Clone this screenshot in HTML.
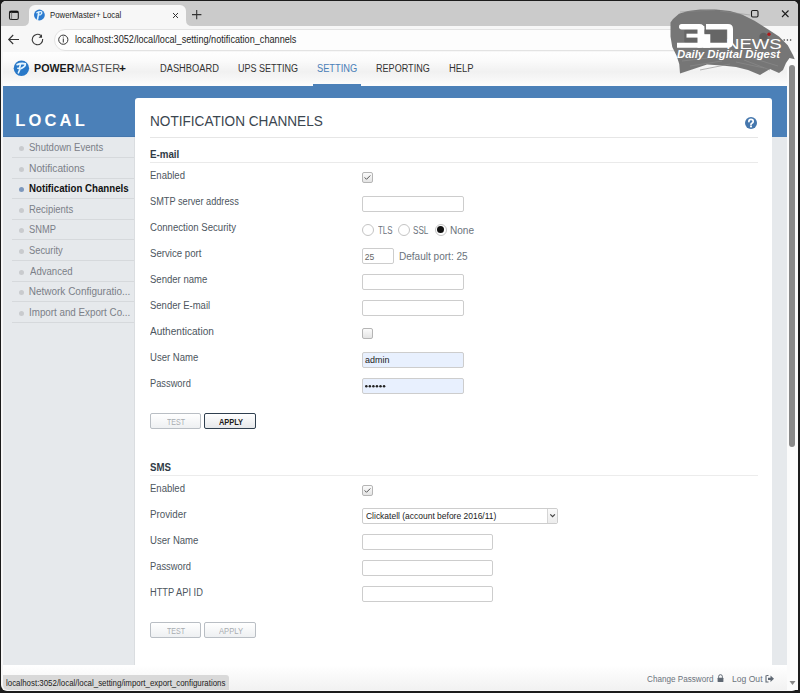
<!DOCTYPE html>
<html><head><meta charset="utf-8">
<style>
*{margin:0;padding:0;box-sizing:border-box}
html,body{width:800px;height:693px;overflow:hidden;background:#1c1c1c;font-family:"Liberation Sans",sans-serif}
div{position:absolute}
.t{white-space:nowrap;line-height:1;transform-origin:0 0}
.inp{left:362px;width:102px;height:16px;border:1px solid #cdcdcd;border-radius:2px;background:#fff}
.chk{left:362px;width:11px;height:11px;border:1px solid #b5b5b5;border-radius:2px;background:linear-gradient(#fbfbfb,#e4e4e4)}
.rad{width:12px;height:12px;border-radius:50%;border:1px solid #c4c4c4;background:#fff}
.btn{height:16px;border:1px solid #b9bec4;border-radius:2px;background:linear-gradient(#fff,#eef0f2)}
.sep{height:1px;background:#d5d9dd}
.dot{width:5px;height:5px;border-radius:50%;background:#c9cbce}
</style></head><body>
<div style="left:1px;top:1px;width:797px;height:690px;background:#f7f7f7;border-radius:5px 5px 6px 6px"></div>
<div style="left:1px;top:1px;width:797px;height:25px;background:#cbcbcb;border-radius:5px 5px 0 0"></div>
<div style="left:29px;top:5px;width:157px;height:22px;background:#f7f7f7;border-radius:6px 6px 0 0"></div>
<svg style="position:absolute;left:0;top:0" width="220" height="27">
 <path d="M23 26 Q29 26 29 20 L29 26 Z" fill="#f7f7f7"/>
 <path d="M186 20 Q186 26 192 26 L186 26 Z" fill="#f7f7f7"/>
 <rect x="9.5" y="11.2" width="8.8" height="8.3" rx="1.6" fill="none" stroke="#1e1e1e" stroke-width="1.1"/>
 <rect x="9.6" y="10.8" width="8.6" height="2.1" fill="#111"/>
 <line x1="11.6" y1="12" x2="11.6" y2="19.5" stroke="#555" stroke-width="0.7"/>
 <circle cx="39.4" cy="15" r="5.4" fill="#2b7bd0"/>
 <path d="M36.8 12.7 Q39.2 11.3 41.6 11.9 Q42.5 13.3 40.8 14.5 Q40 15 39.1 14.9" fill="none" stroke="#dff3ff" stroke-width="1.3" stroke-linecap="round"/>
 <path d="M38.7 12.6 L37.6 19.2" fill="none" stroke="#dff3ff" stroke-width="1.6" stroke-linecap="round"/>
 <path d="M173 13 L178 18 M178 13 L173 18" stroke="#333" stroke-width="1"/>
 <path d="M192 14.6 L201.4 14.6 M196.7 10 L196.7 19.2" stroke="#333" stroke-width="1.1"/>
</svg>
<div class="t" style="left:49.88px;top:11px;font-size:9px;color:#1f1f1f;transform:scaleX(0.8667);">PowerMaster+ Local</div>
<div style="left:53.5px;top:29px;width:716px;height:21.5px;background:#fdfdfd;border-radius:11px;border:1px solid #e3e3e3"></div>
<svg style="position:absolute;left:0;top:26px" width="80" height="26">
 <path d="M9 13.5 L19 13.5 M13.2 9 L8.7 13.5 L13.2 18" fill="none" stroke="#333" stroke-width="1.1"/>
 <path d="M42.68 13.05 A5.2 5.2 0 1 1 40.84 9.52" fill="none" stroke="#3a3a3a" stroke-width="1.1"/>
 <path d="M41.9 8.2 L42.1 11.8 L38.6 11.7 Z" fill="#333"/>
 <circle cx="63.3" cy="13.7" r="4.6" fill="none" stroke="#333" stroke-width="1"/>
 <path d="M63.3 12.5 L63.3 16.5" stroke="#333" stroke-width="1"/>
 <circle cx="63.3" cy="11" r="0.55" fill="#333"/>
</svg>
<div class="t" style="left:74.71px;top:35px;font-size:10px;color:#1f1f1f;transform:scaleX(0.9134);">localhost:3052/local/local_setting/notification_channels</div>
<div style="left:3px;top:52px;width:784px;height:623px;background:#fff;"></div>
<div style="left:3px;top:52px;width:784px;height:34px;background:linear-gradient(#fefefe,#fbfbfb 25%,#f1f1f1 58%,#f8f8f8 85%,#fdfdfd);"></div>
<svg style="position:absolute;left:13px;top:60px" width="17" height="17">
 <circle cx="8.4" cy="8.2" r="7.7" fill="#2878c8"/>
 <path d="M4.2 4.6 Q8 2.9 12.2 3.8 Q12.8 6.6 8.8 8.1 L8.2 8.3" fill="none" stroke="#e6f6ff" stroke-width="1.8" stroke-linecap="round"/>
 <path d="M7.4 4.3 L6.6 8 L4.9 8.3 L7.1 8.9 L5.4 12.8" fill="none" stroke="#e6f6ff" stroke-width="1.6" stroke-linecap="round" stroke-linejoin="round"/>
</svg>
<div class="t" style="left:34.30px;top:64px;font-size:10px;color:#1a1a1a;font-weight:bold;transform:scaleX(1.0717);">POWER</div>
<div class="t" style="left:74.53px;top:64px;font-size:10px;color:#4a4a4a;transform:scaleX(1.0828);">MASTER</div>
<div class="t" style="left:119.12px;top:64px;font-size:10px;color:#1a1a1a;font-weight:bold;transform:scaleX(1.1881);">+</div>
<div class="t" style="left:159.51px;top:64px;font-size:10px;color:#333;transform:scaleX(0.9300);">DASHBOARD</div>
<div class="t" style="left:238.02px;top:64px;font-size:10px;color:#333;transform:scaleX(0.9003);">UPS SETTING</div>
<div class="t" style="left:317.48px;top:64px;font-size:10px;color:#4b80b8;transform:scaleX(0.9276);">SETTING</div>
<div style="left:313px;top:84px;width:48px;height:2px;background:#4b80b8;"></div>
<div class="t" style="left:376.27px;top:64px;font-size:10px;color:#333;transform:scaleX(0.9074);">REPORTING</div>
<div class="t" style="left:448.65px;top:64px;font-size:10px;color:#333;transform:scaleX(0.9435);">HELP</div>
<div style="left:3px;top:86px;width:784px;height:51px;background:#4b80b8;"></div>
<div class="t" style="left:15.18px;top:111.5px;font-size:16.5px;color:#fff;font-weight:bold;letter-spacing:3.2px">LOCAL</div>
<div style="left:3px;top:137px;width:132px;height:528px;background:#e6e9ec;border-right:1px solid #dadde0"></div>
<div style="left:3px;top:136px;width:132px;height:1px;background:#4577ad;"></div>
<div style="left:3px;top:137px;width:131px;height:1px;background:#e0e7ef;"></div>
<div style="left:772px;top:137px;width:15px;height:528px;background:#e6e9ec;"></div>
<div style="left:12px;top:157px;width:122px;height:1px;background:#d6d9dc;"></div>
<div style="left:19px;top:145.5px;width:5px;height:5px;background:#c9cbce;border-radius:50%"></div>
<div class="t" style="left:29.07px;top:143px;font-size:10px;color:#7b8088;transform:scaleX(0.9539);">Shutdown Events</div>
<div style="left:12px;top:178px;width:122px;height:1px;background:#d6d9dc;"></div>
<div style="left:19px;top:166.5px;width:5px;height:5px;background:#c9cbce;border-radius:50%"></div>
<div class="t" style="left:28.68px;top:164px;font-size:10px;color:#7b8088;transform:scaleX(1.0225);">Notifications</div>
<div style="left:12px;top:198px;width:122px;height:1px;background:#d6d9dc;"></div>
<div style="left:19px;top:186.5px;width:5px;height:5px;background:#7d98bd;border-radius:50%"></div>
<div class="t" style="left:28.87px;top:184px;font-size:10px;color:#111;font-weight:bold;transform:scaleX(0.9700);">Notification Channels</div>
<div style="left:12px;top:219px;width:122px;height:1px;background:#d6d9dc;"></div>
<div style="left:19px;top:207.5px;width:5px;height:5px;background:#c9cbce;border-radius:50%"></div>
<div class="t" style="left:28.74px;top:205px;font-size:10px;color:#7b8088;transform:scaleX(0.9462);">Recipients</div>
<div style="left:12px;top:239px;width:122px;height:1px;background:#d6d9dc;"></div>
<div style="left:19px;top:227.5px;width:5px;height:5px;background:#c9cbce;border-radius:50%"></div>
<div class="t" style="left:29.08px;top:225px;font-size:10px;color:#7b8088;transform:scaleX(0.9319);">SNMP</div>
<div style="left:12px;top:260px;width:122px;height:1px;background:#d6d9dc;"></div>
<div style="left:19px;top:248.5px;width:5px;height:5px;background:#c9cbce;border-radius:50%"></div>
<div class="t" style="left:29.08px;top:246px;font-size:10px;color:#7b8088;transform:scaleX(0.9341);">Security</div>
<div style="left:12px;top:281px;width:122px;height:1px;background:#d6d9dc;"></div>
<div style="left:19px;top:269.5px;width:5px;height:5px;background:#c9cbce;border-radius:50%"></div>
<div class="t" style="left:30.30px;top:267px;font-size:10px;color:#7b8088;transform:scaleX(0.9578);">Advanced</div>
<div style="left:12px;top:301px;width:122px;height:1px;background:#d6d9dc;"></div>
<div style="left:19px;top:289.5px;width:5px;height:5px;background:#c9cbce;border-radius:50%"></div>
<div class="t" style="left:28.70px;top:287px;font-size:10px;color:#7b8088;">Network Configuratio...</div>
<div style="left:12px;top:322px;width:122px;height:1px;background:#d6d9dc;"></div>
<div style="left:19px;top:310.5px;width:5px;height:5px;background:#c9cbce;border-radius:50%"></div>
<div class="t" style="left:28.62px;top:308px;font-size:10px;color:#7b8088;transform:scaleX(0.9793);">Import and Export Co...</div>
<div style="left:135px;top:98px;width:637px;height:567px;background:#fff;border-radius:3px 3px 0 0"></div>
<div class="t" style="left:149.71px;top:114px;font-size:14px;color:#3b4650;transform:scaleX(0.9717);">NOTIFICATION CHANNELS</div>
<div style="left:150px;top:137px;width:608px;height:1px;background:#e6e6e6;"></div>
<div style="left:745px;top:116.5px;width:12px;height:12px;background:#4577ad;border-radius:50%"></div>
<svg style="position:absolute;left:745px;top:116.5px" width="12" height="12"><path d="M3.9 4.6 Q3.9 2.4 6 2.4 Q8.2 2.4 8.2 4.4 Q8.2 5.6 6.9 6.2 Q6 6.6 6 7.6" fill="none" stroke="#fff" stroke-width="1.7" stroke-linecap="round"/><circle cx="6" cy="9.5" r="1.05" fill="#fff"/></svg>
<div class="t" style="left:149.57px;top:150px;font-size:10px;color:#2f3a45;font-weight:bold;transform:scaleX(0.9756);">E-mail</div>
<div style="left:150px;top:162px;width:608px;height:1px;background:#eaeaea;"></div>
<div class="t" style="left:150.24px;top:171px;font-size:10px;color:#4d5660;transform:scaleX(0.9518);">Enabled</div>
<div class="t" style="left:149.79px;top:197px;font-size:10px;color:#4d5660;transform:scaleX(0.9195);">SMTP server address</div>
<div class="t" style="left:149.72px;top:223px;font-size:10px;color:#4d5660;transform:scaleX(0.9607);">Connection Security</div>
<div class="t" style="left:149.77px;top:249px;font-size:10px;color:#4d5660;transform:scaleX(0.9641);">Service port</div>
<div class="t" style="left:149.77px;top:275px;font-size:10px;color:#4d5660;transform:scaleX(0.9544);">Sender name</div>
<div class="t" style="left:149.77px;top:301px;font-size:10px;color:#4d5660;transform:scaleX(0.9486);">Sender E-mail</div>
<div class="t" style="left:150.20px;top:327px;font-size:10px;color:#4d5660;transform:scaleX(1.0072);">Authentication</div>
<div class="t" style="left:150.28px;top:353px;font-size:10px;color:#4d5660;transform:scaleX(0.9534);">User Name</div>
<div class="t" style="left:150.26px;top:379px;font-size:10px;color:#4d5660;transform:scaleX(0.9294);">Password</div>
<div style="left:362px;top:172px;width:11px;height:11px;background:;border:1px solid #b5b5b5;border-radius:2px;background:linear-gradient(#fbfbfb,#e4e4e4)"></div>
<svg style="position:absolute;left:362px;top:172px" width="11" height="11"><path d="M2.6 5.4 L4.5 7.3 L8.3 3.5" fill="none" stroke="#555" stroke-width="1"/></svg>
<div class="inp" style="top:196px"></div>
<div class="rad" style="left:362px;top:223.5px"></div>
<div class="rad" style="left:398px;top:223.5px"></div>
<div class="rad" style="left:434.5px;top:223.5px"></div>
<div style="left:437px;top:226px;width:7px;height:7px;background:#111;border-radius:50%"></div>
<div class="t" style="left:378.04px;top:226px;font-size:10px;color:#6b737c;transform:scaleX(0.7910);">TLS</div>
<div class="t" style="left:413.44px;top:226px;font-size:10px;color:#6b737c;transform:scaleX(0.8099);">SSL</div>
<div class="t" style="left:449.80px;top:226px;font-size:10px;color:#6b737c;transform:scaleX(1.0044);">None</div>
<div class="inp" style="top:248px;width:32px"></div>
<div class="t" style="left:364.77px;top:252.5px;font-size:8.5px;color:#666;">25</div>
<div class="t" style="left:398.90px;top:252px;font-size:10px;color:#6b737c;transform:scaleX(1.0037);">Default port: 25</div>
<div class="inp" style="top:274px"></div>
<div class="inp" style="top:300px"></div>
<div style="left:362px;top:328px;width:11px;height:11px;background:;border:1px solid #b5b5b5;border-radius:2px;background:linear-gradient(#fbfbfb,#e4e4e4)"></div>
<div class="inp" style="top:352px;background:#e8f0fe"></div>
<div class="t" style="left:364.64px;top:356px;font-size:9px;color:#222;transform:scaleX(0.9947);">admin</div>
<div class="inp" style="top:378px;background:#e8f0fe"></div>
<svg style="position:absolute;left:362px;top:378px" width="40" height="16"><circle cx="4.30" cy="8.2" r="1.25" fill="#222"/><circle cx="7.85" cy="8.2" r="1.25" fill="#222"/><circle cx="11.40" cy="8.2" r="1.25" fill="#222"/><circle cx="14.95" cy="8.2" r="1.25" fill="#222"/><circle cx="18.50" cy="8.2" r="1.25" fill="#222"/><circle cx="22.05" cy="8.2" r="1.25" fill="#222"/></svg>
<div style="left:150px;top:413px;width:51px;height:16px;background:;border:1px solid #b9bec4;border-radius:2px;background:linear-gradient(#fff,#eef0f2)"></div>
<div class="t" style="left:166.76px;top:418px;font-size:8.5px;color:#a8acb0;transform:scaleX(0.8327);">TEST</div>
<div style="left:204px;top:413px;width:52px;height:16px;background:;border:1px solid #2f3f4f;border-radius:2px;background:linear-gradient(#fff,#e6e8ea)"></div>
<div class="t" style="left:218.51px;top:418px;font-size:8.5px;color:#1c1c1c;font-weight:bold;transform:scaleX(0.8736);">APPLY</div>
<div class="t" style="left:149.96px;top:463px;font-size:10px;color:#2f3a45;font-weight:bold;transform:scaleX(0.9644);">SMS</div>
<div style="left:150px;top:475px;width:608px;height:1px;background:#ececec;"></div>
<div class="t" style="left:150.24px;top:484px;font-size:10px;color:#4d5660;transform:scaleX(0.9518);">Enabled</div>
<div class="t" style="left:150.22px;top:510px;font-size:10px;color:#4d5660;transform:scaleX(0.9780);">Provider</div>
<div class="t" style="left:150.28px;top:536px;font-size:10px;color:#4d5660;transform:scaleX(0.9575);">User Name</div>
<div class="t" style="left:150.25px;top:562px;font-size:10px;color:#4d5660;transform:scaleX(0.9341);">Password</div>
<div class="t" style="left:150.26px;top:588px;font-size:10px;color:#4d5660;transform:scaleX(0.9265);">HTTP API ID</div>
<div style="left:362px;top:485px;width:11px;height:11px;background:;border:1px solid #b5b5b5;border-radius:2px;background:linear-gradient(#fbfbfb,#e4e4e4)"></div>
<svg style="position:absolute;left:362px;top:485px" width="11" height="11"><path d="M2.6 5.4 L4.5 7.3 L8.3 3.5" fill="none" stroke="#555" stroke-width="1"/></svg>
<div class="inp" style="top:508px;width:196px"></div>
<div style="left:547px;top:509px;width:1px;height:14px;background:#d5d5d5;"></div>
<div style="left:548px;top:509px;width:9px;height:14px;background:linear-gradient(#fafafa,#ececec);border-radius:0 2px 2px 0"></div>
<svg style="position:absolute;left:548px;top:509px" width="10" height="14"><path d="M2.3 5.3 L4.6 7.6 L6.9 5.3" fill="none" stroke="#444" stroke-width="1.2"/></svg>
<div class="t" style="left:365.58px;top:512px;font-size:9px;color:#222;transform:scaleX(0.9416);">Clickatell (account before 2016/11)</div>
<div class="inp" style="top:534px;width:131px"></div>
<div class="inp" style="top:560px;width:131px"></div>
<div class="inp" style="top:586px;width:131px"></div>
<div style="left:150px;top:621.5px;width:51px;height:16px;background:;border:1px solid #b9bec4;border-radius:2px;background:linear-gradient(#fff,#eef0f2)"></div>
<div class="t" style="left:166.76px;top:626.5px;font-size:8.5px;color:#a8acb0;transform:scaleX(0.8327);">TEST</div>
<div style="left:204px;top:621.5px;width:52px;height:16px;background:;border:1px solid #b9bec4;border-radius:2px;background:linear-gradient(#fff,#eef0f2)"></div>
<div class="t" style="left:218.70px;top:626.5px;font-size:8.5px;color:#a8acb0;transform:scaleX(0.8946);">APPLY</div>
<div style="left:3px;top:665px;width:784px;height:25px;background:linear-gradient(#fff,#f2f2f2);"></div>
<div class="t" style="left:647.49px;top:675px;font-size:8.5px;color:#6b737c;transform:scaleX(0.9575);">Change Password</div>
<div class="t" style="left:732.11px;top:675px;font-size:8.5px;color:#6b737c;transform:scaleX(1.0089);">Log Out</div>
<svg style="position:absolute;left:715px;top:672px" width="62" height="14">
 <path d="M3.6 5.8 L3.6 4.6 A1.9 1.9 0 0 1 7.4 4.6 L7.4 5.8" fill="none" stroke="#5f6873" stroke-width="1"/>
 <rect x="2.6" y="5.7" width="5.8" height="4.4" rx="0.5" fill="#5f6873"/>
 <path d="M51.5 3.5 L53.5 3.5 M51 3.5 L51 10 L53.5 10" fill="none" stroke="#5f6873" stroke-width="1.1"/>
 <path d="M53 5.7 L55.5 5.7 L55.5 3.5 L59 6.8 L55.5 10 L55.5 7.9 L53 7.9 Z" fill="#5f6873"/>
</svg>
<div style="left:787px;top:52px;width:11px;height:638px;background:#fbfbfb;"></div>
<div style="left:789px;top:65px;width:6px;height:382px;background:#8a8a8a;border-radius:3px"></div>
<svg style="position:absolute;left:787px;top:678px" width="11" height="10"><path d="M2.5 3 L8.5 3 L5.5 7 Z" fill="#888"/></svg>
<div style="left:3px;top:675px;width:226px;height:15px;background:#d9d9d9;border-radius:0 3px 0 5px"></div>
<div class="t" style="left:5.79px;top:679px;font-size:9px;color:#222;transform:scaleX(0.8770);">localhost:3052/local/local_setting/import_export_configurations</div>
<svg style="position:absolute;left:660px;top:0" width="140" height="80">
 <rect x="91.5" y="10.5" width="6.5" height="6.5" rx="1.2" fill="none" stroke="#1e1e1e" stroke-width="1.1"/>
 <path d="M122 10.5 L128.5 17 M128.5 10.5 L122 17" stroke="#1e1e1e" stroke-width="1.1"/>
 <circle cx="124.2" cy="40" r="0.8" fill="#333"/><circle cx="127.4" cy="40" r="0.8" fill="#333"/><circle cx="130.6" cy="40" r="0.8" fill="#333"/>
 <polygon points="10.50,22.50 13.00,19.00 19.00,13.75 28.00,11.10 40.00,9.40 56.00,9.40 70.00,11.10 82.00,14.60 94.50,20.75 106.75,28.60 119.00,36.50 127.75,45.25 133.00,54.90 134.75,59.25 129.50,58.00 126.00,63.00 123.00,70.00 119.00,73.00 110.00,69.00 100.00,75.00 88.00,70.00 76.00,67.00 62.00,65.50 47.00,64.50 32.00,69.50 20.00,73.50 19.25,64.00 16.60,55.75 12.25,47.00 10.50,36.50" fill="#767676"/>
 <path d="M22 61 L48 58 M30 66 L62 61 M40 70 L70 64 M76 62 L104 68 M84 60 L110 70 M92 58 L118 66" stroke="#8c8c8c" stroke-width="0.8" fill="none" opacity="0.8"/>
 <path d="M20 12 L55 10 M60 11 L90 15" stroke="#8a8a8a" stroke-width="0.7" fill="none" opacity="0.7"/>
 <circle cx="103.5" cy="37" r="4.2" fill="#5a5a5a" opacity="0.8"/>
 <circle cx="109" cy="34.3" r="1.7" fill="#b01818"/>
 <rect x="24.3" y="29.3" width="42.2" height="13.4" rx="1.5" fill="#666"/>
 <g fill="#fff">
  <path d="M21.7 24 L39.3 24 Q44.3 24 44.3 29 L44.3 29.5 L21.7 29.5 Q19 29.5 19 26.75 Q19 24 21.7 24 Z"/>
  <rect x="37.5" y="26" width="6.8" height="21.8"/>
  <rect x="26.5" y="33.7" width="17.8" height="3.9"/>
  <path d="M17 42.7 L44.3 42.7 L44.3 42.8 Q44.3 47.8 39.3 47.8 L17 47.8 Z"/>
  <path d="M46 24 L68 24 Q73 24 73 29 L73 42.8 Q73 47.8 68 47.8 L43.5 47.8 L43.5 42.7 L67.2 42.7 L67.2 29.5 L46 29.5 Z"/>
  <rect x="43.5" y="34.2" width="6.8" height="13.6"/>
 </g>
</svg>
<div class="t" style="left:726.01px;top:37px;font-size:14px;color:#fff;transform:scaleX(1.3269);">NEWS</div>
<div class="t" style="left:677.33px;top:49.5px;font-size:10px;color:#fff;font-weight:bold;font-style:italic;transform:scaleX(1.1377);">Daily Digital Digest</div>
</body></html>
